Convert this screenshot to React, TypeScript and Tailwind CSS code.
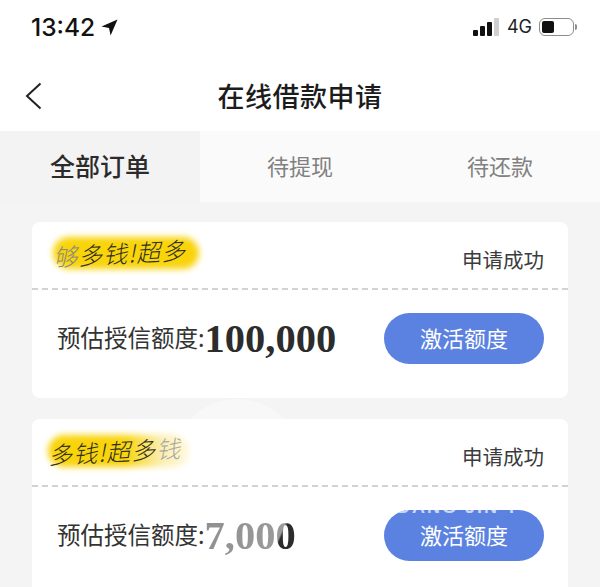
import React from 'react';

const font = 'font-["Noto_Sans_CJK_SC","Noto_Sans",sans-serif]';

function StatusBar() {
  return (
    <div className="flex h-[50px] shrink-0 items-start justify-between pl-[31px] pr-[23px] pt-[12px]">
      <div className='flex items-center gap-[6px] font-["Inter",sans-serif] text-[24.5px] leading-[30px] font-medium text-[#111]'>
        <span>13:42</span>
        <svg width="17" height="17" viewBox="0 0 17 17" className="mt-[1px]">
          <path d="M16.5 0.5 L0.5 7.6 L8 9 L9.6 16.5 Z" fill="#111" />
        </svg>
      </div>
      <div className="flex h-[30px] items-center">
        <div className="flex items-end gap-[2px]">
          <span className="h-[6px] w-[5px] rounded-[1px] bg-[#111]" />
          <span className="h-[10px] w-[5px] rounded-[1px] bg-[#111]" />
          <span className="h-[14px] w-[5px] rounded-[1px] bg-[#111]" />
          <span className="h-[18px] w-[5px] rounded-[1px] bg-[#cfcfcf]" />
        </div>
        <span className='ml-[8px] font-["Inter",sans-serif] text-[18px] leading-[20px] text-[#222]'>4G</span>
        <div className="ml-[7px] flex items-center gap-[1px]">
          <div className="flex h-[18px] w-[35px] items-center rounded-[6px] border border-[#8c8c8c] p-[2px]">
            <div className="h-full w-[12px] rounded-[2px] bg-[#111]" />
          </div>
          <div className="h-[6px] w-[2px] rounded-r bg-[#8c8c8c]" />
        </div>
      </div>
    </div>
  );
}

function NavBar() {
  return (
    <div className="relative flex h-[81px] shrink-0 items-start justify-center pt-[28px]">
      <svg width="17" height="28" viewBox="0 0 17 28" className="absolute left-[25px] top-[32px]" fill="none">
        <path d="M15.5 1.5 L2 14 L15.5 26.5" stroke="#222" strokeWidth="2" />
      </svg>
      <span className="text-[27px] leading-[36px] font-medium tracking-[0.5px] text-[#1c1c1c]">在线借款申请</span>
    </div>
  );
}

function Tabs() {
  return (
    <div className="grid h-[71px] shrink-0 grid-cols-3 bg-[#fafafa]">
      <div className="flex items-center justify-center bg-[#f3f3f3] pb-[2px] text-[25px] font-medium text-[#2b2b2b]">全部订单</div>
      <div className="flex items-center justify-center pb-[2px] text-[22px] text-[#808080]">待提现</div>
      <div className="flex items-center justify-center pb-[2px] text-[22px] text-[#808080]">待还款</div>
    </div>
  );
}

function Scribble({
  lead,
  text,
  tail,
  offset,
  width,
  fade,
}: {
  lead?: string;
  text: string;
  tail?: string;
  offset: string;
  width: string;
  fade?: boolean;
}) {
  return (
    <div className={`relative flex h-[40px] items-center ${offset} ${width}`}>
      <div
        className={`absolute inset-x-[1px] inset-y-[4px] rounded-full blur-[3px] ${
          fade
            ? 'bg-[linear-gradient(90deg,#f9d40b_0%,#f9d40b_55%,#fbeeb0_80%,#fff8dc_100%)]'
            : 'bg-[#f9d40b]'
        }`}
      />
      <span className="relative -rotate-3 pl-[1px] text-[24px] leading-[30px] font-light tracking-[1px] whitespace-nowrap text-[#2f2f20] italic">
        {lead && <span className="text-[#8a8a80]">{lead}</span>}
        {text}
        {tail && <span className="text-[#a8a8a0]">{tail}</span>}
      </span>
    </div>
  );
}

function OrderCard({
  scribble,
  amount,
  faded,
  className,
}: {
  scribble: React.ReactNode;
  amount: React.ReactNode;
  faded?: boolean;
  className: string;
}) {
  return (
    <div className={`relative rounded-[8px] bg-white ${className}`}>
      <div className="flex h-[66px] items-center justify-between pr-[24px]">
        {scribble}
        <span className="pt-[8px] text-[20.5px] leading-[28px] text-[#3c3c3c]">申请成功</span>
      </div>
      <div className="h-[2px] bg-[repeating-linear-gradient(90deg,#d2d2d2_0,#d2d2d2_6px,transparent_6px,transparent_10px)]" />
      <div className="flex h-[108px] items-center justify-between pb-[11px] pl-[25px] pr-[24px]">
        <div className="flex items-center">
          <span className="-mt-[3px] text-[23.5px] leading-[32px] text-[#333]">预估授信额度:</span>
          {amount}
        </div>
        <div className="relative flex h-[51px] w-[160px] items-center justify-center overflow-hidden rounded-full bg-[#5b82e0] text-[22px] text-white">
          {faded && (
            <span className='absolute -top-[12px] left-[13px] font-["Liberation_Sans",sans-serif] text-[18px] leading-[18px] font-bold tracking-[2px] whitespace-nowrap text-white/70'>
              DANG JIN T
            </span>
          )}
          <span className="-mt-[2px]">激活额度</span>
        </div>
      </div>
    </div>
  );
}

export default function App() {
  return (
    <div className={`relative flex h-[587px] w-[600px] flex-col overflow-hidden bg-white ${font}`}>
      <StatusBar />
      <NavBar />
      <Tabs />
      <div className="relative flex-1 bg-[#f4f4f4] px-[32px] pt-[20px]">
        <div className="absolute left-[172px] top-[197px] h-[130px] w-[130px] rounded-full bg-[#f8f8f8]" />
        <OrderCard
          className="h-[176px]"
          scribble={<Scribble lead="够" text="多钱!超多" offset="ml-[20px] -mt-[5px]" width="w-[148px]" />}
          amount={
            <span className='font-["Liberation_Serif",serif] text-[40.5px] leading-[44px] font-bold text-[#2c2c2c]'>100,000</span>
          }
        />
        <OrderCard
          className="mt-[21px] h-[176px]"
          faded
          scribble={<Scribble text="多钱!超多" tail="钱" offset="ml-[15px] -mt-[3px]" width="w-[143px]" fade />}
          amount={
            <span className='bg-[linear-gradient(115deg,#8f8f8f_0%,#9a9a9a_76%,#2c2c2c_78%,#2c2c2c_100%)] bg-clip-text font-["Liberation_Serif",serif] text-[40.5px] leading-[44px] font-bold text-transparent'>
              7,000
            </span>
          }
        />
      </div>
    </div>
  );
}
